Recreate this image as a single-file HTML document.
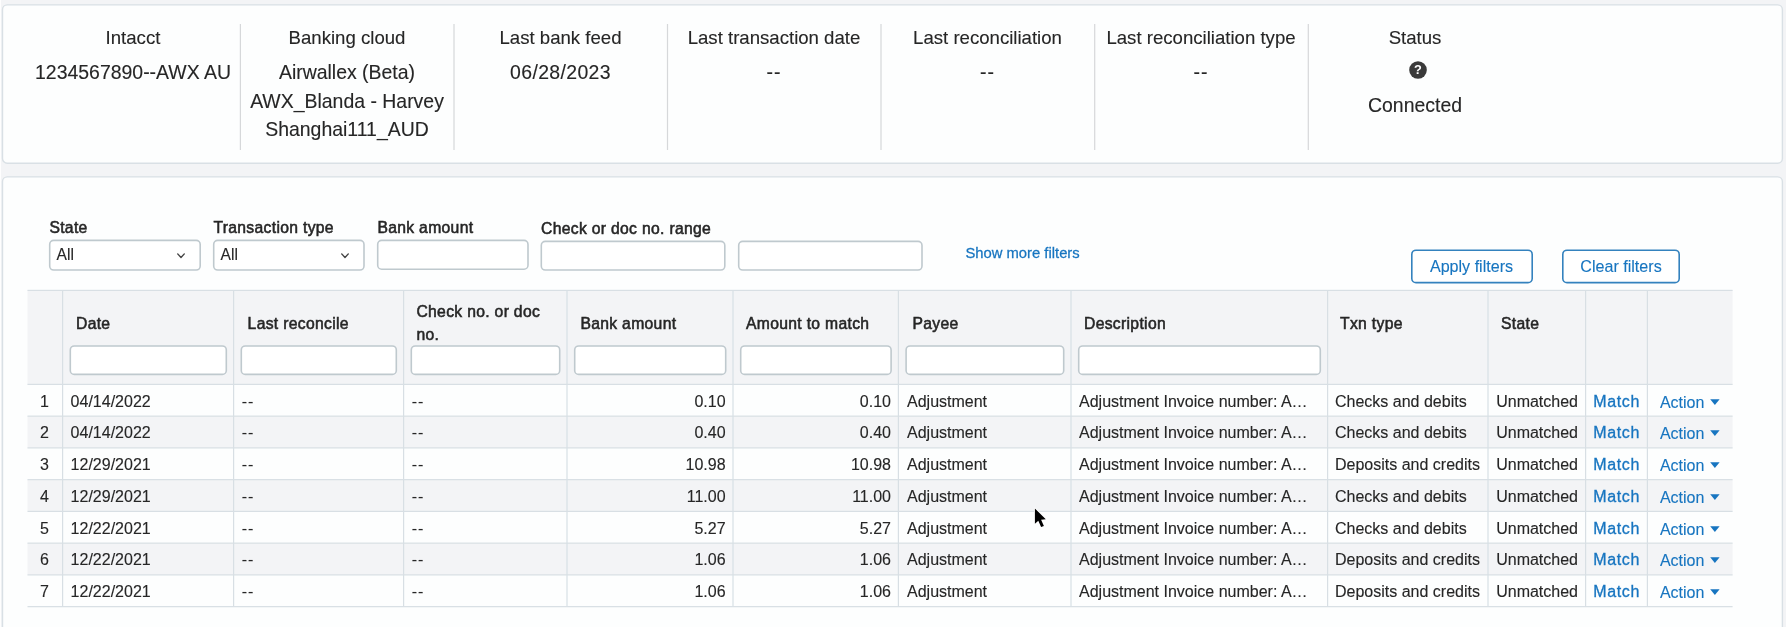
<!DOCTYPE html>
<html lang="en"><head><meta charset="utf-8"><title>Bank transactions</title>
<style>
html,body{margin:0;padding:0;}
body{width:1790px;height:630px;overflow:hidden;background:#ffffff;font-family:"Liberation Sans", Arial, Helvetica, sans-serif;position:relative;}
#page{filter:blur(0.4px);position:absolute;left:0;top:0;width:1786px;height:627px;background:#f3f4f6;overflow:hidden;}
.b{position:absolute;box-sizing:border-box;}
.t{position:absolute;white-space:nowrap;display:block;}
svg{position:absolute;overflow:visible;}
</style></head><body><div id="page">
<svg style="left:0;top:0" width="1786" height="627" viewBox="0 0 1786 627"><rect x="0.00" y="0.00" width="0.90" height="627.00" fill="#ffffff"/>
<rect x="2.50" y="4.90" width="1779.90" height="158.30" rx="4.80" fill="#fdfefe" stroke="#d9e0e5" stroke-width="1.4"/>
<rect x="239.80" y="24.00" width="1.20" height="126.00" fill="#d6d8da"/>
<rect x="453.40" y="24.00" width="1.20" height="126.00" fill="#d6d8da"/>
<rect x="666.90" y="24.00" width="1.20" height="126.00" fill="#d6d8da"/>
<rect x="880.40" y="24.00" width="1.20" height="126.00" fill="#d6d8da"/>
<rect x="1094.10" y="24.00" width="1.20" height="126.00" fill="#d6d8da"/>
<rect x="1307.70" y="24.00" width="1.20" height="126.00" fill="#d6d8da"/>
<rect x="2.50" y="176.90" width="1779.90" height="462.40" rx="4.80" fill="#fdfefe" stroke="#d9e0e5" stroke-width="1.4"/>
<rect x="49.70" y="240.40" width="150.50" height="29.60" rx="4.00" fill="#ffffff" stroke="#bfc9ce" stroke-width="1.6"/>
<rect x="213.70" y="240.40" width="150.30" height="29.60" rx="4.00" fill="#ffffff" stroke="#bfc9ce" stroke-width="1.6"/>
<rect x="377.70" y="240.40" width="150.30" height="28.80" rx="4.00" fill="#ffffff" stroke="#bfc9ce" stroke-width="1.6"/>
<rect x="541.30" y="241.40" width="183.50" height="28.60" rx="4.00" fill="#ffffff" stroke="#bfc9ce" stroke-width="1.6"/>
<rect x="738.70" y="241.40" width="183.30" height="28.60" rx="4.00" fill="#ffffff" stroke="#bfc9ce" stroke-width="1.6"/>
<rect x="1411.80" y="250.20" width="120.40" height="32.40" rx="4.20" fill="#ffffff" stroke="#3482be" stroke-width="1.6"/>
<rect x="1562.80" y="250.20" width="116.40" height="32.40" rx="4.20" fill="#ffffff" stroke="#3482be" stroke-width="1.6"/>
<rect x="27.50" y="290.00" width="1705.10" height="94.90" fill="#f3f4f6"/>
<rect x="27.50" y="416.15" width="1705.10" height="31.75" fill="#f3f4f6"/>
<rect x="27.50" y="479.65" width="1705.10" height="31.75" fill="#f3f4f6"/>
<rect x="27.50" y="543.15" width="1705.10" height="31.75" fill="#f3f4f6"/>
<rect x="27.50" y="289.80" width="1705.10" height="1.20" fill="#d8dfe4"/>
<rect x="27.50" y="383.80" width="1705.10" height="1.20" fill="#d8dfe4"/>
<rect x="27.50" y="415.55" width="1705.10" height="1.20" fill="#d8dfe4"/>
<rect x="27.50" y="447.30" width="1705.10" height="1.20" fill="#d8dfe4"/>
<rect x="27.50" y="479.05" width="1705.10" height="1.20" fill="#d8dfe4"/>
<rect x="27.50" y="510.80" width="1705.10" height="1.20" fill="#d8dfe4"/>
<rect x="27.50" y="542.55" width="1705.10" height="1.20" fill="#d8dfe4"/>
<rect x="27.50" y="574.30" width="1705.10" height="1.20" fill="#d8dfe4"/>
<rect x="27.50" y="606.05" width="1705.10" height="1.20" fill="#d8dfe4"/>
<rect x="62.00" y="290.00" width="1.20" height="316.65" fill="#d8dfe4"/>
<rect x="233.00" y="290.00" width="1.20" height="316.65" fill="#d8dfe4"/>
<rect x="403.00" y="290.00" width="1.20" height="316.65" fill="#d8dfe4"/>
<rect x="566.40" y="290.00" width="1.20" height="316.65" fill="#d8dfe4"/>
<rect x="732.40" y="290.00" width="1.20" height="316.65" fill="#d8dfe4"/>
<rect x="897.80" y="290.00" width="1.20" height="316.65" fill="#d8dfe4"/>
<rect x="1070.40" y="290.00" width="1.20" height="316.65" fill="#d8dfe4"/>
<rect x="1327.00" y="290.00" width="1.20" height="316.65" fill="#d8dfe4"/>
<rect x="1487.40" y="290.00" width="1.20" height="316.65" fill="#d8dfe4"/>
<rect x="1585.00" y="290.00" width="1.20" height="316.65" fill="#d8dfe4"/>
<rect x="1646.80" y="290.00" width="1.20" height="316.65" fill="#d8dfe4"/>
<rect x="70.30" y="346.00" width="156.00" height="28.40" rx="4.00" fill="#ffffff" stroke="#bfc9ce" stroke-width="1.6"/>
<rect x="241.30" y="346.00" width="155.00" height="28.40" rx="4.00" fill="#ffffff" stroke="#bfc9ce" stroke-width="1.6"/>
<rect x="411.30" y="346.00" width="148.40" height="28.40" rx="4.00" fill="#ffffff" stroke="#bfc9ce" stroke-width="1.6"/>
<rect x="574.70" y="346.00" width="151.00" height="28.40" rx="4.00" fill="#ffffff" stroke="#bfc9ce" stroke-width="1.6"/>
<rect x="740.70" y="346.00" width="150.40" height="28.40" rx="4.00" fill="#ffffff" stroke="#bfc9ce" stroke-width="1.6"/>
<rect x="906.10" y="346.00" width="157.60" height="28.40" rx="4.00" fill="#ffffff" stroke="#bfc9ce" stroke-width="1.6"/>
<rect x="1078.70" y="346.00" width="241.60" height="28.40" rx="4.00" fill="#ffffff" stroke="#bfc9ce" stroke-width="1.6"/></svg>
<span class="t " style="top:29.45px;font-size:18.6px;line-height:18.6px;color:#262626;-webkit-text-stroke:0.12px #262626;left:-67.00px;width:400px;text-align:center;">Intacct</span>
<span class="t " style="top:29.45px;font-size:18.6px;line-height:18.6px;color:#262626;-webkit-text-stroke:0.12px #262626;left:147.00px;width:400px;text-align:center;">Banking cloud</span>
<span class="t " style="top:29.45px;font-size:18.6px;line-height:18.6px;color:#262626;-webkit-text-stroke:0.12px #262626;left:360.50px;width:400px;text-align:center;">Last bank feed</span>
<span class="t " style="top:29.45px;font-size:18.6px;line-height:18.6px;color:#262626;-webkit-text-stroke:0.12px #262626;left:574.00px;width:400px;text-align:center;">Last transaction date</span>
<span class="t " style="top:29.45px;font-size:18.6px;line-height:18.6px;color:#262626;-webkit-text-stroke:0.12px #262626;left:787.50px;width:400px;text-align:center;">Last reconciliation</span>
<span class="t " style="top:29.45px;font-size:18.6px;line-height:18.6px;color:#262626;-webkit-text-stroke:0.12px #262626;left:1001.00px;width:400px;text-align:center;">Last reconciliation type</span>
<span class="t " style="top:29.45px;font-size:18.6px;line-height:18.6px;color:#262626;-webkit-text-stroke:0.12px #262626;left:1215.00px;width:400px;text-align:center;">Status</span>
<span class="t " style="top:62.52px;font-size:19.45px;line-height:19.45px;color:#262626;-webkit-text-stroke:0.12px #262626;left:-67.00px;width:400px;text-align:center;">1234567890--AWX AU</span>
<span class="t " style="top:62.52px;font-size:19.45px;line-height:19.45px;color:#262626;-webkit-text-stroke:0.12px #262626;left:147.00px;width:400px;text-align:center;">Airwallex (Beta)</span>
<span class="t " style="top:91.53px;font-size:19.45px;line-height:19.45px;color:#262626;-webkit-text-stroke:0.12px #262626;left:147.00px;width:400px;text-align:center;">AWX_Blanda - Harvey</span>
<span class="t " style="top:119.53px;font-size:19.45px;line-height:19.45px;color:#262626;-webkit-text-stroke:0.12px #262626;left:147.00px;width:400px;text-align:center;">Shanghai111_AUD</span>
<span class="t " style="top:62.52px;font-size:19.45px;line-height:19.45px;color:#262626;letter-spacing:0.35px;-webkit-text-stroke:0.12px #262626;left:360.50px;width:400px;text-align:center;">06/28/2023</span>
<span class="t " style="top:62.52px;font-size:19.45px;line-height:19.45px;color:#262626;letter-spacing:1.0px;-webkit-text-stroke:0.12px #262626;left:574.00px;width:400px;text-align:center;">--</span>
<span class="t " style="top:62.52px;font-size:19.45px;line-height:19.45px;color:#262626;letter-spacing:1.0px;-webkit-text-stroke:0.12px #262626;left:787.50px;width:400px;text-align:center;">--</span>
<span class="t " style="top:62.52px;font-size:19.45px;line-height:19.45px;color:#262626;letter-spacing:1.0px;-webkit-text-stroke:0.12px #262626;left:1001.00px;width:400px;text-align:center;">--</span>
<span class="t " style="top:95.53px;font-size:19.45px;line-height:19.45px;color:#262626;-webkit-text-stroke:0.12px #262626;left:1215.00px;width:400px;text-align:center;">Connected</span>
<svg style="left:1408.60px;top:60.60px" width="18" height="18" viewBox="0 0 18 18"><circle cx="9" cy="9" r="8.8" fill="#3a3a3a"/><text x="9" y="13.3" text-anchor="middle" font-family='"Liberation Sans", Arial, Helvetica, sans-serif' font-weight="700" font-size="12.8" fill="#ffffff">?</text></svg>
<span class="t " style="top:219.90px;font-size:15.7px;line-height:15.7px;color:#262626;letter-spacing:0.32px;-webkit-text-stroke:0.54px #262626;left:49.40px;">State</span>
<span class="t " style="top:219.90px;font-size:15.7px;line-height:15.7px;color:#262626;letter-spacing:0.32px;-webkit-text-stroke:0.54px #262626;left:213.40px;">Transaction type</span>
<span class="t " style="top:219.90px;font-size:15.7px;line-height:15.7px;color:#262626;letter-spacing:0.32px;-webkit-text-stroke:0.54px #262626;left:377.40px;">Bank amount</span>
<span class="t " style="top:220.90px;font-size:15.7px;line-height:15.7px;color:#262626;letter-spacing:0.32px;-webkit-text-stroke:0.54px #262626;left:541.00px;">Check or doc no. range</span>
<span class="t " style="top:246.95px;font-size:15.6px;line-height:15.6px;color:#262626;-webkit-text-stroke:0.12px #262626;left:56.60px;">All</span>
<span class="t " style="top:246.95px;font-size:15.6px;line-height:15.6px;color:#262626;-webkit-text-stroke:0.12px #262626;left:220.60px;">All</span>
<svg style="left:176px;top:251.8px" width="10" height="8" viewBox="0 0 10 8"><path d="M1.7 1.9 L5 5.5 L8.3 1.9" fill="none" stroke="#444" stroke-width="1.4" stroke-linecap="round" stroke-linejoin="round"/></svg>
<svg style="left:340px;top:251.8px" width="10" height="8" viewBox="0 0 10 8"><path d="M1.7 1.9 L5 5.5 L8.3 1.9" fill="none" stroke="#444" stroke-width="1.4" stroke-linecap="round" stroke-linejoin="round"/></svg>
<span class="t " style="top:245.85px;font-size:14.8px;line-height:14.8px;color:#1775c0;-webkit-text-stroke:0.27px #1775c0;left:965.40px;">Show more filters</span>
<span class="t " style="top:258.20px;font-size:16.1px;line-height:16.1px;color:#1775c0;-webkit-text-stroke:0.12px #1775c0;left:1410.50px;width:122px;text-align:center;">Apply filters</span>
<span class="t " style="top:258.20px;font-size:16.1px;line-height:16.1px;color:#1775c0;-webkit-text-stroke:0.12px #1775c0;left:1562.00px;width:118px;text-align:center;">Clear filters</span>
<span class="t " style="top:315.90px;font-size:15.7px;line-height:15.7px;color:#262626;letter-spacing:0.32px;-webkit-text-stroke:0.54px #262626;left:76.00px;">Date</span>
<span class="t " style="top:315.90px;font-size:15.7px;line-height:15.7px;color:#262626;letter-spacing:0.32px;-webkit-text-stroke:0.54px #262626;left:247.60px;">Last reconcile</span>
<span class="t " style="top:315.90px;font-size:15.7px;line-height:15.7px;color:#262626;letter-spacing:0.32px;-webkit-text-stroke:0.54px #262626;left:580.40px;">Bank amount</span>
<span class="t " style="top:315.90px;font-size:15.7px;line-height:15.7px;color:#262626;letter-spacing:0.32px;-webkit-text-stroke:0.54px #262626;left:746.00px;">Amount to match </span>
<span class="t " style="top:315.90px;font-size:15.7px;line-height:15.7px;color:#262626;letter-spacing:0.32px;-webkit-text-stroke:0.54px #262626;left:912.40px;">Payee</span>
<span class="t " style="top:315.90px;font-size:15.7px;line-height:15.7px;color:#262626;letter-spacing:0.32px;-webkit-text-stroke:0.54px #262626;left:1084.00px;">Description</span>
<span class="t " style="top:315.90px;font-size:15.7px;line-height:15.7px;color:#262626;letter-spacing:0.32px;-webkit-text-stroke:0.54px #262626;left:1340.00px;">Txn type</span>
<span class="t " style="top:315.90px;font-size:15.7px;line-height:15.7px;color:#262626;letter-spacing:0.32px;-webkit-text-stroke:0.54px #262626;left:1501.00px;">State</span>
<span class="t " style="top:303.90px;font-size:15.7px;line-height:15.7px;color:#262626;letter-spacing:0.32px;-webkit-text-stroke:0.54px #262626;left:416.40px;">Check no. or doc</span>
<span class="t " style="top:326.90px;font-size:15.7px;line-height:15.7px;color:#262626;letter-spacing:0.32px;-webkit-text-stroke:0.54px #262626;left:416.40px;">no.</span>
<span class="t " style="top:393.75px;font-size:16px;line-height:16px;color:#262626;-webkit-text-stroke:0.12px #262626;left:29.55px;width:30px;text-align:center;">1</span>
<span class="t " style="top:393.75px;font-size:16px;line-height:16px;color:#262626;-webkit-text-stroke:0.12px #262626;left:70.60px;">04/14/2022</span>
<span class="t " style="top:393.75px;font-size:16px;line-height:16px;color:#262626;letter-spacing:0.9px;-webkit-text-stroke:0.12px #262626;left:241.80px;">--</span>
<span class="t " style="top:393.75px;font-size:16px;line-height:16px;color:#262626;letter-spacing:0.9px;-webkit-text-stroke:0.12px #262626;left:411.80px;">--</span>
<span class="t " style="top:393.75px;font-size:16px;line-height:16px;color:#262626;-webkit-text-stroke:0.12px #262626;left:425.60px;width:300px;text-align:right;">0.10</span>
<span class="t " style="top:393.75px;font-size:16px;line-height:16px;color:#262626;-webkit-text-stroke:0.12px #262626;left:591.00px;width:300px;text-align:right;">0.10</span>
<span class="t " style="top:393.75px;font-size:16px;line-height:16px;color:#262626;-webkit-text-stroke:0.12px #262626;left:907.00px;">Adjustment</span>
<span class="t " style="top:393.75px;font-size:16px;line-height:16px;color:#262626;-webkit-text-stroke:0.12px #262626;left:1079.00px;">Adjustment Invoice number: A…</span>
<span class="t " style="top:393.75px;font-size:16px;line-height:16px;color:#262626;-webkit-text-stroke:0.12px #262626;left:1335.00px;">Checks and debits</span>
<span class="t " style="top:393.75px;font-size:16px;line-height:16px;color:#262626;-webkit-text-stroke:0.12px #262626;left:1496.20px;">Unmatched</span>
<span class="t " style="top:393.75px;font-size:16px;line-height:16px;color:#1775c0;letter-spacing:0.65px;-webkit-text-stroke:0.32px #1775c0;left:1593.20px;">Match</span>
<span class="t " style="top:394.75px;font-size:16px;line-height:16px;color:#1775c0;-webkit-text-stroke:0.12px #1775c0;left:1659.90px;">Action</span>
<svg style="left:1709.6px;top:399.00px" width="10" height="7" viewBox="0 0 10 7"><path d="M0.2 0.2 H9.6 L4.9 6.0 Z" fill="#1775c0"/></svg>
<span class="t " style="top:424.75px;font-size:16px;line-height:16px;color:#262626;-webkit-text-stroke:0.12px #262626;left:29.55px;width:30px;text-align:center;">2</span>
<span class="t " style="top:424.75px;font-size:16px;line-height:16px;color:#262626;-webkit-text-stroke:0.12px #262626;left:70.60px;">04/14/2022</span>
<span class="t " style="top:424.75px;font-size:16px;line-height:16px;color:#262626;letter-spacing:0.9px;-webkit-text-stroke:0.12px #262626;left:241.80px;">--</span>
<span class="t " style="top:424.75px;font-size:16px;line-height:16px;color:#262626;letter-spacing:0.9px;-webkit-text-stroke:0.12px #262626;left:411.80px;">--</span>
<span class="t " style="top:424.75px;font-size:16px;line-height:16px;color:#262626;-webkit-text-stroke:0.12px #262626;left:425.60px;width:300px;text-align:right;">0.40</span>
<span class="t " style="top:424.75px;font-size:16px;line-height:16px;color:#262626;-webkit-text-stroke:0.12px #262626;left:591.00px;width:300px;text-align:right;">0.40</span>
<span class="t " style="top:424.75px;font-size:16px;line-height:16px;color:#262626;-webkit-text-stroke:0.12px #262626;left:907.00px;">Adjustment</span>
<span class="t " style="top:424.75px;font-size:16px;line-height:16px;color:#262626;-webkit-text-stroke:0.12px #262626;left:1079.00px;">Adjustment Invoice number: A…</span>
<span class="t " style="top:424.75px;font-size:16px;line-height:16px;color:#262626;-webkit-text-stroke:0.12px #262626;left:1335.00px;">Checks and debits</span>
<span class="t " style="top:424.75px;font-size:16px;line-height:16px;color:#262626;-webkit-text-stroke:0.12px #262626;left:1496.20px;">Unmatched</span>
<span class="t " style="top:424.75px;font-size:16px;line-height:16px;color:#1775c0;letter-spacing:0.65px;-webkit-text-stroke:0.32px #1775c0;left:1593.20px;">Match</span>
<span class="t " style="top:425.75px;font-size:16px;line-height:16px;color:#1775c0;-webkit-text-stroke:0.12px #1775c0;left:1659.90px;">Action</span>
<svg style="left:1709.6px;top:430.00px" width="10" height="7" viewBox="0 0 10 7"><path d="M0.2 0.2 H9.6 L4.9 6.0 Z" fill="#1775c0"/></svg>
<span class="t " style="top:456.75px;font-size:16px;line-height:16px;color:#262626;-webkit-text-stroke:0.12px #262626;left:29.55px;width:30px;text-align:center;">3</span>
<span class="t " style="top:456.75px;font-size:16px;line-height:16px;color:#262626;-webkit-text-stroke:0.12px #262626;left:70.60px;">12/29/2021</span>
<span class="t " style="top:456.75px;font-size:16px;line-height:16px;color:#262626;letter-spacing:0.9px;-webkit-text-stroke:0.12px #262626;left:241.80px;">--</span>
<span class="t " style="top:456.75px;font-size:16px;line-height:16px;color:#262626;letter-spacing:0.9px;-webkit-text-stroke:0.12px #262626;left:411.80px;">--</span>
<span class="t " style="top:456.75px;font-size:16px;line-height:16px;color:#262626;-webkit-text-stroke:0.12px #262626;left:425.60px;width:300px;text-align:right;">10.98</span>
<span class="t " style="top:456.75px;font-size:16px;line-height:16px;color:#262626;-webkit-text-stroke:0.12px #262626;left:591.00px;width:300px;text-align:right;">10.98</span>
<span class="t " style="top:456.75px;font-size:16px;line-height:16px;color:#262626;-webkit-text-stroke:0.12px #262626;left:907.00px;">Adjustment</span>
<span class="t " style="top:456.75px;font-size:16px;line-height:16px;color:#262626;-webkit-text-stroke:0.12px #262626;left:1079.00px;">Adjustment Invoice number: A…</span>
<span class="t " style="top:456.75px;font-size:16px;line-height:16px;color:#262626;-webkit-text-stroke:0.12px #262626;left:1335.00px;">Deposits and credits</span>
<span class="t " style="top:456.75px;font-size:16px;line-height:16px;color:#262626;-webkit-text-stroke:0.12px #262626;left:1496.20px;">Unmatched</span>
<span class="t " style="top:456.75px;font-size:16px;line-height:16px;color:#1775c0;letter-spacing:0.65px;-webkit-text-stroke:0.32px #1775c0;left:1593.20px;">Match</span>
<span class="t " style="top:457.75px;font-size:16px;line-height:16px;color:#1775c0;-webkit-text-stroke:0.12px #1775c0;left:1659.90px;">Action</span>
<svg style="left:1709.6px;top:462.00px" width="10" height="7" viewBox="0 0 10 7"><path d="M0.2 0.2 H9.6 L4.9 6.0 Z" fill="#1775c0"/></svg>
<span class="t " style="top:488.75px;font-size:16px;line-height:16px;color:#262626;-webkit-text-stroke:0.12px #262626;left:29.55px;width:30px;text-align:center;">4</span>
<span class="t " style="top:488.75px;font-size:16px;line-height:16px;color:#262626;-webkit-text-stroke:0.12px #262626;left:70.60px;">12/29/2021</span>
<span class="t " style="top:488.75px;font-size:16px;line-height:16px;color:#262626;letter-spacing:0.9px;-webkit-text-stroke:0.12px #262626;left:241.80px;">--</span>
<span class="t " style="top:488.75px;font-size:16px;line-height:16px;color:#262626;letter-spacing:0.9px;-webkit-text-stroke:0.12px #262626;left:411.80px;">--</span>
<span class="t " style="top:488.75px;font-size:16px;line-height:16px;color:#262626;-webkit-text-stroke:0.12px #262626;left:425.60px;width:300px;text-align:right;">11.00</span>
<span class="t " style="top:488.75px;font-size:16px;line-height:16px;color:#262626;-webkit-text-stroke:0.12px #262626;left:591.00px;width:300px;text-align:right;">11.00</span>
<span class="t " style="top:488.75px;font-size:16px;line-height:16px;color:#262626;-webkit-text-stroke:0.12px #262626;left:907.00px;">Adjustment</span>
<span class="t " style="top:488.75px;font-size:16px;line-height:16px;color:#262626;-webkit-text-stroke:0.12px #262626;left:1079.00px;">Adjustment Invoice number: A…</span>
<span class="t " style="top:488.75px;font-size:16px;line-height:16px;color:#262626;-webkit-text-stroke:0.12px #262626;left:1335.00px;">Checks and debits</span>
<span class="t " style="top:488.75px;font-size:16px;line-height:16px;color:#262626;-webkit-text-stroke:0.12px #262626;left:1496.20px;">Unmatched</span>
<span class="t " style="top:488.75px;font-size:16px;line-height:16px;color:#1775c0;letter-spacing:0.65px;-webkit-text-stroke:0.32px #1775c0;left:1593.20px;">Match</span>
<span class="t " style="top:489.75px;font-size:16px;line-height:16px;color:#1775c0;-webkit-text-stroke:0.12px #1775c0;left:1659.90px;">Action</span>
<svg style="left:1709.6px;top:494.00px" width="10" height="7" viewBox="0 0 10 7"><path d="M0.2 0.2 H9.6 L4.9 6.0 Z" fill="#1775c0"/></svg>
<span class="t " style="top:520.75px;font-size:16px;line-height:16px;color:#262626;-webkit-text-stroke:0.12px #262626;left:29.55px;width:30px;text-align:center;">5</span>
<span class="t " style="top:520.75px;font-size:16px;line-height:16px;color:#262626;-webkit-text-stroke:0.12px #262626;left:70.60px;">12/22/2021</span>
<span class="t " style="top:520.75px;font-size:16px;line-height:16px;color:#262626;letter-spacing:0.9px;-webkit-text-stroke:0.12px #262626;left:241.80px;">--</span>
<span class="t " style="top:520.75px;font-size:16px;line-height:16px;color:#262626;letter-spacing:0.9px;-webkit-text-stroke:0.12px #262626;left:411.80px;">--</span>
<span class="t " style="top:520.75px;font-size:16px;line-height:16px;color:#262626;-webkit-text-stroke:0.12px #262626;left:425.60px;width:300px;text-align:right;">5.27</span>
<span class="t " style="top:520.75px;font-size:16px;line-height:16px;color:#262626;-webkit-text-stroke:0.12px #262626;left:591.00px;width:300px;text-align:right;">5.27</span>
<span class="t " style="top:520.75px;font-size:16px;line-height:16px;color:#262626;-webkit-text-stroke:0.12px #262626;left:907.00px;">Adjustment</span>
<span class="t " style="top:520.75px;font-size:16px;line-height:16px;color:#262626;-webkit-text-stroke:0.12px #262626;left:1079.00px;">Adjustment Invoice number: A…</span>
<span class="t " style="top:520.75px;font-size:16px;line-height:16px;color:#262626;-webkit-text-stroke:0.12px #262626;left:1335.00px;">Checks and debits</span>
<span class="t " style="top:520.75px;font-size:16px;line-height:16px;color:#262626;-webkit-text-stroke:0.12px #262626;left:1496.20px;">Unmatched</span>
<span class="t " style="top:520.75px;font-size:16px;line-height:16px;color:#1775c0;letter-spacing:0.65px;-webkit-text-stroke:0.32px #1775c0;left:1593.20px;">Match</span>
<span class="t " style="top:521.75px;font-size:16px;line-height:16px;color:#1775c0;-webkit-text-stroke:0.12px #1775c0;left:1659.90px;">Action</span>
<svg style="left:1709.6px;top:526.00px" width="10" height="7" viewBox="0 0 10 7"><path d="M0.2 0.2 H9.6 L4.9 6.0 Z" fill="#1775c0"/></svg>
<span class="t " style="top:551.75px;font-size:16px;line-height:16px;color:#262626;-webkit-text-stroke:0.12px #262626;left:29.55px;width:30px;text-align:center;">6</span>
<span class="t " style="top:551.75px;font-size:16px;line-height:16px;color:#262626;-webkit-text-stroke:0.12px #262626;left:70.60px;">12/22/2021</span>
<span class="t " style="top:551.75px;font-size:16px;line-height:16px;color:#262626;letter-spacing:0.9px;-webkit-text-stroke:0.12px #262626;left:241.80px;">--</span>
<span class="t " style="top:551.75px;font-size:16px;line-height:16px;color:#262626;letter-spacing:0.9px;-webkit-text-stroke:0.12px #262626;left:411.80px;">--</span>
<span class="t " style="top:551.75px;font-size:16px;line-height:16px;color:#262626;-webkit-text-stroke:0.12px #262626;left:425.60px;width:300px;text-align:right;">1.06</span>
<span class="t " style="top:551.75px;font-size:16px;line-height:16px;color:#262626;-webkit-text-stroke:0.12px #262626;left:591.00px;width:300px;text-align:right;">1.06</span>
<span class="t " style="top:551.75px;font-size:16px;line-height:16px;color:#262626;-webkit-text-stroke:0.12px #262626;left:907.00px;">Adjustment</span>
<span class="t " style="top:551.75px;font-size:16px;line-height:16px;color:#262626;-webkit-text-stroke:0.12px #262626;left:1079.00px;">Adjustment Invoice number: A…</span>
<span class="t " style="top:551.75px;font-size:16px;line-height:16px;color:#262626;-webkit-text-stroke:0.12px #262626;left:1335.00px;">Deposits and credits</span>
<span class="t " style="top:551.75px;font-size:16px;line-height:16px;color:#262626;-webkit-text-stroke:0.12px #262626;left:1496.20px;">Unmatched</span>
<span class="t " style="top:551.75px;font-size:16px;line-height:16px;color:#1775c0;letter-spacing:0.65px;-webkit-text-stroke:0.32px #1775c0;left:1593.20px;">Match</span>
<span class="t " style="top:552.75px;font-size:16px;line-height:16px;color:#1775c0;-webkit-text-stroke:0.12px #1775c0;left:1659.90px;">Action</span>
<svg style="left:1709.6px;top:557.00px" width="10" height="7" viewBox="0 0 10 7"><path d="M0.2 0.2 H9.6 L4.9 6.0 Z" fill="#1775c0"/></svg>
<span class="t " style="top:583.75px;font-size:16px;line-height:16px;color:#262626;-webkit-text-stroke:0.12px #262626;left:29.55px;width:30px;text-align:center;">7</span>
<span class="t " style="top:583.75px;font-size:16px;line-height:16px;color:#262626;-webkit-text-stroke:0.12px #262626;left:70.60px;">12/22/2021</span>
<span class="t " style="top:583.75px;font-size:16px;line-height:16px;color:#262626;letter-spacing:0.9px;-webkit-text-stroke:0.12px #262626;left:241.80px;">--</span>
<span class="t " style="top:583.75px;font-size:16px;line-height:16px;color:#262626;letter-spacing:0.9px;-webkit-text-stroke:0.12px #262626;left:411.80px;">--</span>
<span class="t " style="top:583.75px;font-size:16px;line-height:16px;color:#262626;-webkit-text-stroke:0.12px #262626;left:425.60px;width:300px;text-align:right;">1.06</span>
<span class="t " style="top:583.75px;font-size:16px;line-height:16px;color:#262626;-webkit-text-stroke:0.12px #262626;left:591.00px;width:300px;text-align:right;">1.06</span>
<span class="t " style="top:583.75px;font-size:16px;line-height:16px;color:#262626;-webkit-text-stroke:0.12px #262626;left:907.00px;">Adjustment</span>
<span class="t " style="top:583.75px;font-size:16px;line-height:16px;color:#262626;-webkit-text-stroke:0.12px #262626;left:1079.00px;">Adjustment Invoice number: A…</span>
<span class="t " style="top:583.75px;font-size:16px;line-height:16px;color:#262626;-webkit-text-stroke:0.12px #262626;left:1335.00px;">Deposits and credits</span>
<span class="t " style="top:583.75px;font-size:16px;line-height:16px;color:#262626;-webkit-text-stroke:0.12px #262626;left:1496.20px;">Unmatched</span>
<span class="t " style="top:583.75px;font-size:16px;line-height:16px;color:#1775c0;letter-spacing:0.65px;-webkit-text-stroke:0.32px #1775c0;left:1593.20px;">Match</span>
<span class="t " style="top:584.75px;font-size:16px;line-height:16px;color:#1775c0;-webkit-text-stroke:0.12px #1775c0;left:1659.90px;">Action</span>
<svg style="left:1709.6px;top:589.00px" width="10" height="7" viewBox="0 0 10 7"><path d="M0.2 0.2 H9.6 L4.9 6.0 Z" fill="#1775c0"/></svg>
<svg style="left:1030px;top:503px" width="22" height="28" viewBox="1030 503 22 28"><path d="M1034.9 508.4 L1034.9 523.8 L1038.3 520.7 L1041.1 527.1 L1043.9 525.9 L1041.1 519.7 L1045.8 519.3 Z" fill="#000" stroke="#fff" stroke-width="1.8" stroke-linejoin="round" paint-order="stroke"/></svg>
</div></body></html>
